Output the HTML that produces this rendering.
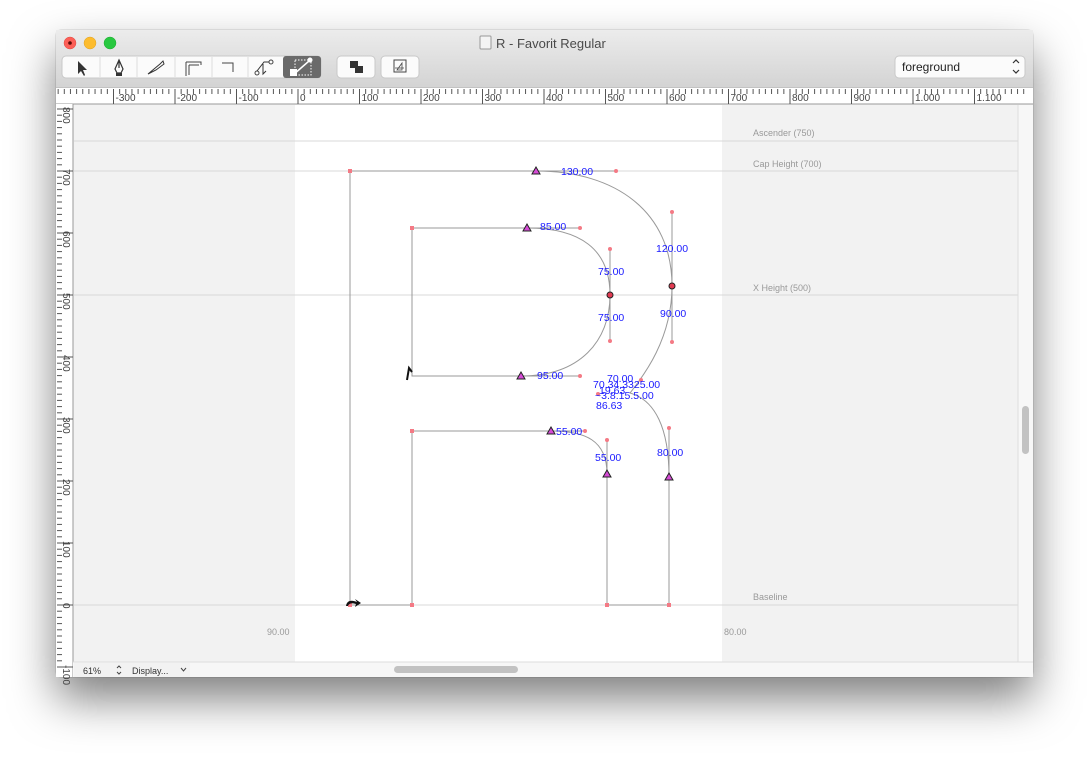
<!DOCTYPE html>
<html><head><meta charset="utf-8"><style>
body{margin:0;width:1089px;height:757px;background:#fff;overflow:hidden;font-family:"Liberation Sans",sans-serif}
#win{position:absolute;left:56px;top:30px;width:977px;height:647px;border-radius:5px;box-shadow:0 22px 45px rgba(0,0,0,.5),0 0 1px rgba(0,0,0,.5);overflow:hidden;background:#f2f2f2}
</style></head><body>
<div id="win"></div>
<svg style="position:absolute;left:0;top:0" width="1089" height="757" font-family="Liberation Sans, sans-serif">
<defs><linearGradient id="tb" x1="0" y1="0" x2="0" y2="1"><stop offset="0" stop-color="#ececec"/><stop offset="1" stop-color="#d3d3d3"/></linearGradient></defs>
<rect x="56" y="30" width="977" height="58" fill="url(#tb)"/>
<line x1="56" y1="88" x2="1033" y2="88" stroke="#b0b0b0"/>
<circle cx="70" cy="43" r="6" fill="#fc5f57" stroke="#de4a42" stroke-width=".5"/><circle cx="70" cy="43" r="1.8" fill="#5a0a06"/>
<circle cx="90" cy="43" r="6" fill="#fdbc2e" stroke="#dea126" stroke-width=".5"/>
<circle cx="110" cy="43" r="6" fill="#28c840" stroke="#1faa30" stroke-width=".5"/>
<rect x="480" y="36" width="11" height="13" rx="1" fill="#f4f4f4" stroke="#999"/>
<text x="496" y="48" font-size="13" fill="#4a4a4a">R - Favorit Regular</text>
<rect x="62" y="56" width="259" height="22" rx="4" fill="#fbfbfb" stroke="#c8c8c8"/>
<rect x="283" y="56" width="38" height="22" rx="3" fill="#6a6a6a"/>
<g stroke="#ddd"><line x1="100" y1="57" x2="100" y2="77"/><line x1="137" y1="57" x2="137" y2="77"/><line x1="175" y1="57" x2="175" y2="77"/><line x1="212" y1="57" x2="212" y2="77"/><line x1="248" y1="57" x2="248" y2="77"/></g>
<path d="M78 61 L78 74 L81 71 L84 76 L85 75 L83 70 L87 70 Z" fill="#333"/>
<path d="M119 60 L115 69 L117 73 L121 73 L123 69 Z M119 60 L119 68" fill="none" stroke="#333" stroke-width="1.2"/><rect x="116" y="73" width="6" height="3" fill="#333"/>
<path d="M148 74 L160 64 L163 61 L164 64 L156 70 Z" fill="none" stroke="#333"/>
<path d="M186 62 H201 V65 M186 62 V76 M189 65 H199 M189 65 V75" fill="none" stroke="#444"/>
<path d="M222 63 H233 V72" fill="none" stroke="#444"/>
<circle cx="257" cy="73" r="2" fill="none" stroke="#444"/><circle cx="271" cy="62" r="2" fill="none" stroke="#444"/><path d="M257 71 L264 62 L269 62 M263 64 L263 74 L266 71" fill="none" stroke="#333"/>
<rect x="295" y="60" width="16" height="15" fill="none" stroke="#fff" stroke-dasharray="1.5 1.5"/>
<line x1="293" y1="75" x2="309" y2="61" stroke="#fff" stroke-width="1.5"/><rect x="290" y="69" width="7" height="7" fill="#fff"/><circle cx="310" cy="60" r="2.5" fill="#fff"/>
<rect x="337" y="56" width="38" height="22" rx="4" fill="#fbfbfb" stroke="#c8c8c8"/>
<rect x="350" y="61" width="8" height="7" fill="#333"/><rect x="355" y="66" width="8" height="7" fill="#333"/>
<rect x="381" y="56" width="38" height="22" rx="4" fill="#fbfbfb" stroke="#c8c8c8"/>
<rect x="394" y="60" width="12" height="12" fill="none" stroke="#444"/><path d="M397 70 L402 63 L402 70 Z M395 68 H404" fill="none" stroke="#444" stroke-width=".8"/>
<rect x="895" y="56" width="130" height="22" rx="4" fill="#fbfbfb" stroke="#c8c8c8"/>
<text x="902" y="71" font-size="12" fill="#222">foreground</text>
<path d="M1013 63 L1016 60 L1019 63 M1013 70 L1016 73 L1019 70" fill="none" stroke="#333" stroke-width="1.2"/>
<rect x="56" y="88" width="977" height="16" fill="#fff"/>
<line x1="56" y1="104" x2="1033" y2="104" stroke="#999"/>
<rect x="56" y="104" width="17" height="573" fill="#fff"/>
<line x1="73" y1="104" x2="73" y2="677" stroke="#999"/>
<rect x="74" y="105" width="944" height="557" fill="#f2f2f2"/>
<rect x="295" y="105" width="427" height="557" fill="#fff"/>
<g id="hr" stroke="#555" stroke-width="1"></g>
<g id="hl" font-size="10" fill="#444"></g>
<g id="vr" stroke="#555" stroke-width="1"></g>
<g id="vl" font-size="10" fill="#444"></g>
<g stroke="#d8d8d8"><line x1="74" y1="141" x2="1018" y2="141"/><line x1="74" y1="171" x2="1018" y2="171"/><line x1="74" y1="295" x2="1018" y2="295"/><line x1="74" y1="605" x2="1018" y2="605"/></g>
<g font-size="9" fill="#999"><text x="753" y="136">Ascender (750)</text><text x="753" y="167">Cap Height (700)</text><text x="753" y="291">X Height (500)</text><text x="753" y="600">Baseline</text><text x="267" y="635">90.00</text><text x="724" y="635">80.00</text></g>
<g fill="none" stroke="#999" stroke-width="1">
<path d="M350 605 V171 H536 C616 171 672 212 672 286 C672 342 640 380 630 393 C655 400 669 428 669 477 V605 H607 V474 C607 440 585 431 551 431 H412 V605 Z"/>
<path d="M412 228 H527 C580 228 610 249 610 295 C610 341 580 376 521 376 H412 Z"/>
<path d="M672 212 V342 M610 249 V341 M536 171 H616 M527 228 H580 M521 376 H580 M551 431 H585 M607 440 V474 M669 428 V477"/>
</g>
<g fill="#f47a85"><circle cx="616" cy="171" r="2"/><circle cx="672" cy="212" r="2"/><circle cx="672" cy="342" r="2"/><circle cx="580" cy="228" r="2"/><circle cx="610" cy="249" r="2"/><circle cx="610" cy="341" r="2"/><circle cx="580" cy="376" r="2"/><circle cx="585" cy="431" r="2"/><circle cx="607" cy="440" r="2"/><circle cx="669" cy="428" r="2"/><circle cx="641" cy="380" r="2"/><circle cx="598" cy="394" r="2"/>
<rect x="348" y="169" width="4" height="4"/><rect x="410" y="226" width="4" height="4"/><rect x="410" y="429" width="4" height="4"/><rect x="410" y="603" width="4" height="4"/><rect x="605" y="603" width="4" height="4"/><rect x="667" y="603" width="4" height="4"/><rect x="348" y="603" width="4" height="4"/></g>
<g fill="#e23b52" stroke="#222"><circle cx="672" cy="286" r="3"/><circle cx="610" cy="295" r="3"/></g>
<g fill="#d64bd6" stroke="#222" stroke-width="1"><path d="M536 167 L540 174 L532 174Z"/><path d="M527 224 L531 231 L523 231Z"/><path d="M521 372 L525 379 L517 379Z"/><path d="M551 427 L555 434 L547 434Z"/><path d="M607 470 L611 477 L603 477Z"/><path d="M669 473 L673 480 L665 480Z"/></g>
<path d="M407 380 L409 368 L412 372" fill="none" stroke="#111" stroke-width="2"/>
<path d="M346 606 C347 600 352 600 357 602 L355 599 L361 603 L355 607 L356 604 C352 603 349 603 348 606" fill="#111"/>
<g font-size="10.5" fill="#1a1aff"><text x="561" y="175">130.00</text><text x="540" y="230">85.00</text><text x="656" y="252">120.00</text><text x="598" y="275">75.00</text><text x="598" y="321">75.00</text><text x="660" y="317">90.00</text><text x="537" y="379">95.00</text><text x="607" y="382">70.00</text><text x="593" y="388">70.34.3325.00</text><text x="599" y="394">19.63</text><text x="595" y="399">~3.8.15.5.00</text><text x="596" y="409">86.63</text><text x="556" y="435">55.00</text><text x="595" y="461">55.00</text><text x="657" y="456">80.00</text></g>
<rect x="1018" y="105" width="15" height="557" fill="#f7f7f7"/><line x1="1018" y1="105" x2="1018" y2="662" stroke="#ddd"/>
<rect x="1022" y="406" width="7" height="48" rx="3.5" fill="#c2c2c2"/>
<rect x="73" y="662" width="960" height="15" fill="#f7f7f7"/><line x1="73" y1="662" x2="1033" y2="662" stroke="#ddd"/>
<rect x="394" y="666" width="124" height="7" rx="3.5" fill="#c2c2c2"/>
<rect x="74" y="663" width="116" height="14" fill="#f2f2f2"/>
<text x="83" y="674" font-size="9" fill="#333">61%</text>
<path d="M117 668 L119 666 L121 668 M117 672 L119 674 L121 672" fill="none" stroke="#444"/>
<text x="132" y="674" font-size="9" fill="#333">Display...</text>
<path d="M181 668 L183.5 671 L186 668" fill="none" stroke="#444"/>
</svg>
<script>
var ns="http://www.w3.org/2000/svg";
function el(p,t,a,txt){var e=document.createElementNS(ns,t);for(var k in a)e.setAttribute(k,a[k]);if(txt)e.textContent=txt;document.getElementById(p).appendChild(e);}
for(var u=-400;u<=1180;u+=10){var x=298+u*0.615;if(x<56||x>1033)continue;var big=u%100==0;el("hr","line",{x1:x,y1:89,x2:x,y2:big?104:94});if(big)el("hl","text",{x:x+2,y:101},u==0?"0":(u<0?u:(u>=1000?"1."+String(u).slice(1):u)));}
for(var v=-100;v<=800;v+=10){var y=605-v*0.62;if(y<105||y>677)continue;var b=v%100==0;el("vr","line",{x1:57,y1:y,x2:b?73:62,y2:y});if(b){el("vl","text",{x:0,y:0,transform:"translate(63,"+(y-2)+") rotate(90)"},String(v));}}
</script>
</body></html>
